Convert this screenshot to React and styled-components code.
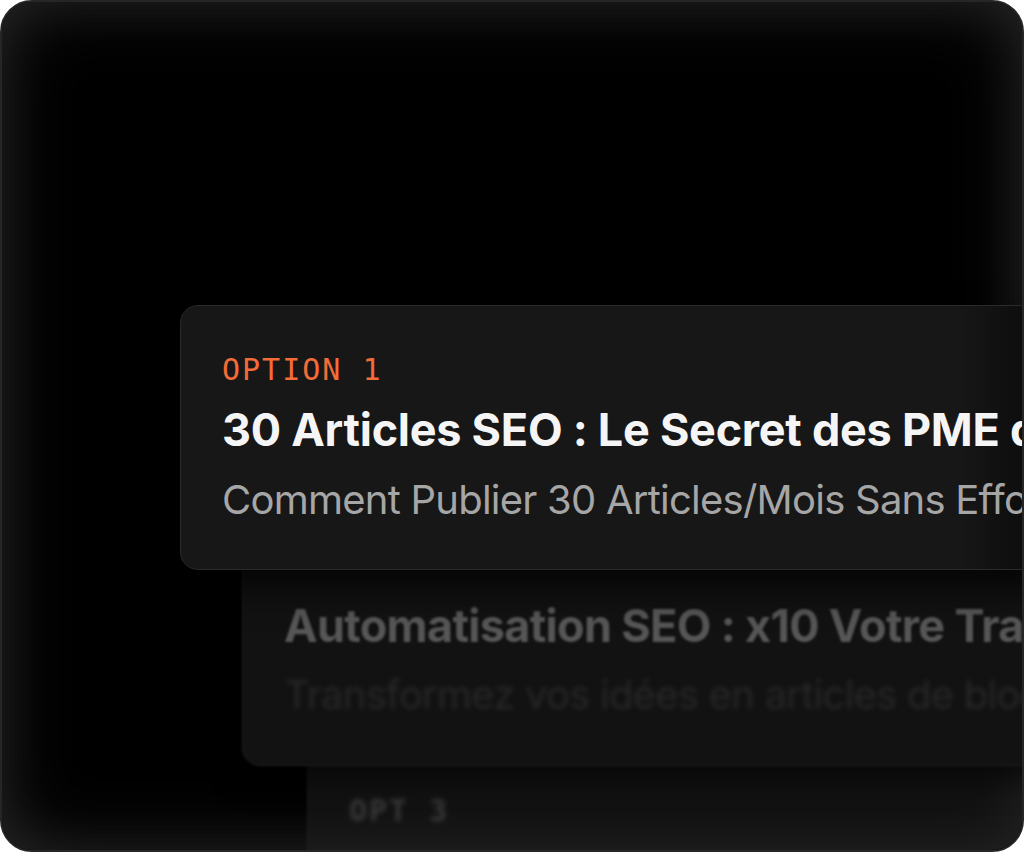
import React from "react";
import styled, { createGlobalStyle } from "styled-components";

const Global = createGlobalStyle`
  html, body { margin: 0; padding: 0; background: #ffffff; }
  body { font-family: Inter, "Noto Sans", sans-serif; }
  * { box-sizing: border-box; }
`;

const Frame = styled.div`
  position: relative;
  width: 1024px;
  height: 852px;
  border: 2px solid #262626;
  border-radius: 32px;
  background: #000;
  overflow: hidden;
  box-shadow: inset 0 0 80px 0 rgba(255, 255, 255, 0.1);

  &::after {
    content: "";
    position: absolute;
    inset: 0;
    border-radius: 30px;
    pointer-events: none;
    z-index: 1;
    box-shadow: inset 0 0 60px 0 rgba(255, 255, 255, 0.08);
  }
`;

const Stack = styled.div`
  display: flex;
  flex-direction: column;
  align-items: flex-start;
  padding: 303px 0 0 178px;
`;

const Card = styled.div`
  position: relative;
  z-index: ${(p) => p.$z};
  width: 1000px;
  flex-shrink: 0;
  margin-left: ${(p) => p.$indent}px;
  margin-top: ${(p) => p.$overlap}px;
  padding: 48.5px 41px 49.5px;
  border-radius: 18px;
  border: 1px solid ${(p) => p.$border};
  background: ${(p) => p.$bg};
  box-shadow: ${(p) => p.$shadow || "none"};
  filter: ${(p) => (p.$blur ? `blur(${p.$blur}px)` : "none")};
  display: flex;
  flex-direction: column;
`;

const Label = styled.div`
  font-family: "DejaVu Sans Mono", "Liberation Mono", monospace;
  font-size: ${(p) => p.$size || 30}px;
  font-weight: ${(p) => p.$weight || 400};
  line-height: 1;
  letter-spacing: 2px;
  color: ${(p) => p.$color};
  margin-bottom: 22.5px;
  white-space: nowrap;
  filter: ${(p) => (p.$blur ? `blur(${p.$blur}px)` : "none")};
`;

const Title = styled.div`
  font-family: Inter, "Noto Sans", sans-serif;
  font-weight: 700;
  font-size: 45px;
  line-height: 1;
  letter-spacing: ${(p) => p.$spacing || "-0.006em"};
  color: ${(p) => p.$color};
  white-space: nowrap;
  margin-bottom: 27.5px;
  filter: ${(p) => (p.$blur ? `blur(${p.$blur}px)` : "none")};
`;

const Subtitle = styled.div`
  font-family: Inter, "Noto Sans", sans-serif;
  font-weight: 400;
  font-size: 40px;
  line-height: 1;
  letter-spacing: -0.019em;
  color: ${(p) => p.$color};
  white-space: nowrap;
  filter: ${(p) => (p.$blur ? `blur(${p.$blur}px)` : "none")};
`;

export default function App() {
  return (
    <>
      <Global />
      <Frame>
        <Stack>
          <Card
            $z={3}
            $indent={0}
            $overlap={0}
            $border="#2a2a2a"
            $bg="linear-gradient(90deg, #171717 0px, #171717 775px, #0d0d0d 846px, #0d0d0d 100%)"
            $shadow="0 18px 36px rgba(0,0,0,0.75)"
          >
            <Label $color="#f36b38">OPTION 1</Label>
            <Title $color="#f5f5f5">30 Articles SEO : Le Secret des PME qui Dominent Google</Title>
            <Subtitle $color="#a6a6a6">Comment Publier 30 Articles/Mois Sans Effort</Subtitle>
          </Card>
          <Card
            $z={2}
            $indent={62}
            $overlap={-17}
            $border="#1e1e1e"
            $bg="#121212"
            $blur={1}
            $shadow="0 14px 30px rgba(0,0,0,0.6)"
          >
            <Title $color="#565656" $spacing="-0.015em" $blur={0.4}>Automatisation SEO : x10 Votre Trafic Organique</Title>
            <Subtitle $color="#282828" $blur={2}>Transformez vos idées en articles de blog optimisés</Subtitle>
          </Card>
          <Card
            $z={0}
            $indent={127}
            $overlap={-19}
            $border="#1d1d1d"
            $bg="#121212"
            $blur={1.5}
          >
            <Label $color="#3a3a3a" $weight={700} $blur={2}>OPT 3</Label>
          </Card>
        </Stack>
      </Frame>
    </>
  );
}
